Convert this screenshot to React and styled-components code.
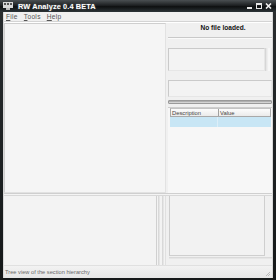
import styled, { createGlobalStyle } from "styled-components";

const Global = createGlobalStyle`
  html, body { margin: 0; padding: 0; background: #1c2a24; }
  * { box-sizing: border-box; }
`;

const Window = styled.div`
  width: 276px;
  height: 280px;
  display: flex;
  flex-direction: column;
  background: linear-gradient(180deg, #2a2e30 0%, #151819 100%);
  font-family: "Liberation Sans", Arial, sans-serif;
`;

const TitleBar = styled.div`
  height: 13px;
  display: flex;
  align-items: center;
  padding: 0 4px 0 3px;
  background: linear-gradient(180deg, #4a4f52 0%, #1d2022 45%, #0e1011 55%, #2c3337 100%);
  color: #fff;
  font-size: 7.4px;
  font-weight: bold;
  text-shadow: 0 0 2px rgba(255, 255, 255, 0.4);
`;

const AppIcon = styled.svg`
  width: 10px;
  height: 8px;
  margin-right: 5px;
`;

const Title = styled.span`
  flex: 1;
  letter-spacing: 0.1px;
`;

const Controls = styled.div`
  display: flex;
  gap: 3px;
  align-items: center;
`;

const Body = styled.div`
  flex: 1;
  margin: 0 3px;
  background: #f0f0f0;
  display: flex;
  flex-direction: column;
  border-left: 1px solid #d8d8d8;
  border-right: 1px solid #d8d8d8;
`;

const MenuBar = styled.div`
  height: 10px;
  display: flex;
  gap: 6px;
  padding: 1px 0 0 2px;
  font-size: 6.6px;
  color: #555;
  border-bottom: 1px solid #d4d4d4;
  box-shadow: 0 1px 0 #fff;
`;

const MenuItem = styled.span`
  letter-spacing: 0.3px;
  u { text-decoration: underline; }
`;

const TopArea = styled.div`
  height: 170px;
  margin-top: 1px;
  display: flex;
  gap: 2px;
`;

const Panel = styled.div`
  background: #f5f5f5;
  border: 1px solid #cfcfcf;
  border-right-color: #e2e2e2;
  border-bottom-color: #e2e2e2;
`;

const TreePanel = styled(Panel)`
  width: 162px;
  height: 100%;
`;

const RightCol = styled.div`
  flex: 1;
  display: flex;
  flex-direction: column;
`;

const Status = styled.div`
  height: 15px;
  display: flex;
  align-items: flex-start;
  justify-content: center;
  padding: 1px 0 0 6px;
  font-size: 6.6px;
  font-weight: bold;
  color: #111;
  border-bottom: 1px solid #c9c9c9;
  box-shadow: 0 1px 0 #fafafa;
`;

const BoxRow = styled.div`
  display: flex;
  margin-top: ${(p) => p.$top}px;
  height: ${(p) => p.$h}px;
`;

const Box = styled.div`
  flex: 1;
  background: #f3f3f3;
  border: 1px solid #cacaca;
  border-right-color: #e6e6e6;
  border-bottom-color: #e6e6e6;
`;

const ScrollStrip = styled.div`
  width: 7px;
  background: linear-gradient(90deg, #e2e2e2, #fafafa 50%, #e8e8e8);
  border-left: 1px solid #d6d6d6;
`;

const Progress = styled.div`
  height: 4px;
  margin-top: 3px;
  background: linear-gradient(180deg, #8e8e8e 0%, #c4c4c4 40%, #dedede 100%);
  border: 1px solid #9a9a9a;
  border-radius: 1px;
`;

const ListView = styled.div`
  flex: 1;
  margin-top: 3px;
  background: #f7f7f7;
  border-top: 1px solid #cdcdcd;
  display: flex;
  flex-direction: column;
`;

const Header = styled.div`
  height: 9px;
  display: flex;
  margin: 0 1px 0 2px;
  border: 1px solid #a9a9a9;
  border-top-color: #c4c4c4;
  background: linear-gradient(180deg, #fcfcfc, #ebebeb);
  font-size: 5.8px;
  color: #444;
`;

const HeaderCell = styled.div`
  width: ${(p) => p.$w || "auto"};
  flex: ${(p) => (p.$w ? "none" : 1)};
  padding: 1px 0 0 1px;
  border-right: ${(p) => (p.$w ? "1px solid #a0a0a0" : "none")};
  line-height: 6px;
`;

const SelectedRow = styled.div`
  height: 10px;
  margin: 0 1px 0 2px;
  display: flex;
  background: #c8e6f5;
`;

const RowCell = styled.div`
  width: ${(p) => p.$w || "auto"};
  flex: ${(p) => (p.$w ? "none" : 1)};
  border-right: ${(p) => (p.$w ? "1px solid #dceef8" : "none")};
`;

const Splitter = styled.div`
  height: 3px;
  border-top: 1px solid #cfcfcf;
  border-bottom: 1px solid #d8d8d8;
  background: #f4f4f4;
`;

const BottomArea = styled.div`
  height: 69px;
  display: flex;
`;

const BottomLeft = styled.div`
  width: 153px;
  background: #f3f3f3;
  border-right: 1px solid #d0d0d0;
`;

const VSplit = styled.div`
  width: 8px;
  display: flex;
  gap: 2px;
  padding-left: 1px;
  background: #f3f3f3;
`;

const VLine = styled.div`
  width: 2px;
  background: linear-gradient(90deg, #d2d2d2, #ececec);
`;

const BottomRight = styled.div`
  flex: 1;
  display: flex;
  flex-direction: column;
  padding-left: 3px;
  border-left: 1px solid #e0e0e0;
`;

const BottomBoxRow = styled.div`
  height: 60px;
  display: flex;
`;

const BottomBox = styled.div`
  flex: 1;
  background: #f2f2f2;
  border-left: 1px solid #cdcdcd;
  border-right: 1px solid #cfcfcf;
  border-bottom: 1px solid #cfcfcf;
`;

const BottomGap = styled.div`
  width: 7px;
`;

const BottomLine = styled.div`
  height: 2px;
  margin-top: 1px;
  background: linear-gradient(180deg, #d4d4d4, #ececec);
`;

const StatusBar = styled.div`
  height: 13px;
  display: flex;
  align-items: center;
  padding-left: 1px;
  font-size: 5.7px;
  color: #6a6a6a;
  background: linear-gradient(180deg, #f2f2f2, #e6e6e6);
  border-top: 1px solid #e0e0e0;
  position: relative;
`;

const Grip = styled.svg`
  position: absolute;
  right: 1px;
  bottom: 1px;
  width: 6px;
  height: 6px;
`;

const BottomFrame = styled.div`
  height: 2px;
`;

export default function App() {
  return (
    <>
      <Global />
      <Window>
        <TitleBar>
          <AppIcon viewBox="0 0 10 8">
            <rect x="0" y="0" width="10" height="6" fill="#d8d8d8" />
            <rect x="1" y="1" width="2" height="2" fill="#555" />
            <rect x="4" y="1" width="2" height="2" fill="#555" />
            <rect x="7" y="1" width="2" height="2" fill="#555" />
            <rect x="3" y="6" width="4" height="2" fill="#bbb" />
          </AppIcon>
          <Title>RW Analyze 0.4 BETA</Title>
          <Controls>
            <svg width="6" height="6" viewBox="0 0 6 6">
              <rect x="0" y="4" width="5" height="2" fill="#e8e8e8" />
            </svg>
            <svg width="6" height="6" viewBox="0 0 6 6">
              <rect x="0.5" y="0.5" width="5" height="5" fill="none" stroke="#e8e8e8" strokeWidth="1" />
              <rect x="0" y="0" width="6" height="2" fill="#e8e8e8" />
            </svg>
            <svg width="7" height="6" viewBox="0 0 7 6">
              <path d="M1 0.5 L6 5.5 M6 0.5 L1 5.5" stroke="#f0f0f0" strokeWidth="1.6" />
            </svg>
          </Controls>
        </TitleBar>
        <Body>
          <MenuBar>
            <MenuItem><u>F</u>ile</MenuItem>
            <MenuItem><u>T</u>ools</MenuItem>
            <MenuItem><u>H</u>elp</MenuItem>
          </MenuBar>
          <TopArea>
            <TreePanel />
            <RightCol>
              <Status>No file loaded.</Status>
              <BoxRow $top={10} $h={23}>
                <Box />
                <ScrollStrip />
              </BoxRow>
              <BoxRow $top={9} $h={17}>
                <Box />
              </BoxRow>
              <Progress />
              <ListView>
                <Header>
                  <HeaderCell $w="48px">Description</HeaderCell>
                  <HeaderCell>Value</HeaderCell>
                </Header>
                <SelectedRow>
                  <RowCell $w="48px" />
                  <RowCell />
                </SelectedRow>
              </ListView>
            </RightCol>
          </TopArea>
          <Splitter />
          <BottomArea>
            <BottomLeft />
            <VSplit>
              <VLine />
              <VLine />
            </VSplit>
            <BottomRight>
              <BottomBoxRow>
                <BottomBox />
                <BottomGap />
              </BottomBoxRow>
              <BottomLine />
            </BottomRight>
          </BottomArea>
          <StatusBar>
            Tree view of the section hierarchy
            <Grip viewBox="0 0 6 6">
              <path d="M5 1 L1 5 M5 3 L3 5" stroke="#b0b0b0" strokeWidth="0.8" />
            </Grip>
          </StatusBar>
        </Body>
        <BottomFrame />
      </Window>
    </>
  );
}
